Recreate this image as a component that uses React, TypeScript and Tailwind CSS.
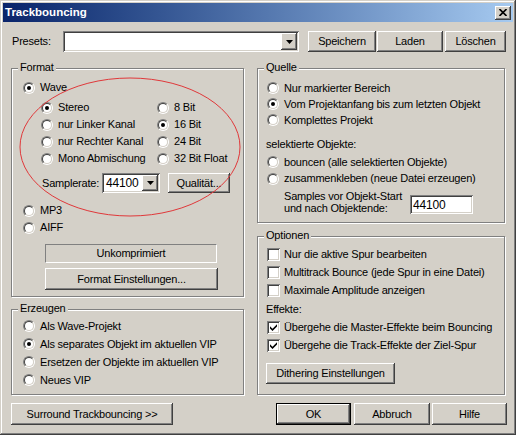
import React from 'react';

// Win2000-style bevels
const raised =
  'shadow-[inset_-1px_-1px_0_#404040,inset_1px_1px_0_#ffffff,inset_-2px_-2px_0_#808080,inset_2px_2px_0_#d4d0c8]';
const sunken =
  'shadow-[inset_1px_1px_0_#808080,inset_-1px_-1px_0_#ffffff,inset_2px_2px_0_#404040,inset_-2px_-2px_0_#d4d0c8]';

const Radio = ({ checked }: { checked?: boolean }) => (
  <span className="flex h-[12px] w-[12px] shrink-0 rounded-full border border-t-[#808080] border-l-[#808080] border-b-white border-r-white">
    <span className="flex h-full w-full items-center justify-center rounded-full border border-t-[#404040] border-l-[#404040] border-b-[#d4d0c8] border-r-[#d4d0c8] bg-white">
      {checked && <span className="h-[4px] w-[4px] rounded-full bg-black" />}
    </span>
  </span>
);

const Check = ({ checked }: { checked?: boolean }) => (
  <span className={`flex h-[13px] w-[13px] shrink-0 items-center justify-center bg-white ${sunken}`}>
    {checked && (
      <svg width="7" height="7" viewBox="0 0 7 7">
        <path d="M0 2.3 L2.5 4.8 L7 0.3 L7 2.5 L2.5 7 L0 4.5 Z" fill="#000" />
      </svg>
    )}
  </span>
);

const RadioRow = ({ label, checked, h = 'h-[17px]' }: { label: string; checked?: boolean; h?: string }) => (
  <div className={`flex items-center gap-[5px] ${h}`}>
    <Radio checked={checked} />
    <span className="whitespace-nowrap">{label}</span>
  </div>
);

const CheckRow = ({ label, checked }: { label: string; checked?: boolean }) => (
  <div className="flex h-[18px] items-center gap-[4px]">
    <Check checked={checked} />
    <span className="whitespace-nowrap">{label}</span>
  </div>
);

const Group = ({ title, className, children }: { title: string; className: string; children: React.ReactNode }) => (
  <div className={`relative flex flex-col border border-[#808080] shadow-[1px_1px_0_#ffffff,inset_1px_1px_0_#ffffff] ${className}`}>
    <span className="absolute -top-[8px] left-[6px] bg-[#d4d0c8] px-[2px] leading-[13px]">{title}</span>
    {children}
  </div>
);

const Btn = ({ children, className }: { children: React.ReactNode; className: string }) => (
  <button className={`flex shrink-0 items-center justify-center bg-[#d4d0c8] ${raised} ${className}`}>
    {children}
  </button>
);

const Arrow = () => (
  <svg width="7" height="4" viewBox="0 0 7 4">
    <path d="M0 0 H7 L3.5 4 Z" fill="#000" />
  </svg>
);

const Combo = ({ value, className }: { value?: string; className: string }) => (
  <div className={`flex shrink-0 bg-white p-[2px] ${sunken} ${className}`}>
    <span className="flex flex-1 items-center pl-[2px] text-[12px]">{value}</span>
    <span className={`flex w-[16px] items-center justify-center bg-[#d4d0c8] ${raised}`}>
      <Arrow />
    </span>
  </div>
);

export default function App() {
  return (
    <div
      className="relative flex h-[435px] w-[516px] flex-col overflow-hidden bg-[#d4d0c8] p-[3px] text-[11px] tracking-[-0.2px] text-black shadow-[inset_-1px_-1px_0_#404040,inset_1px_1px_0_#d4d0c8,inset_-2px_-2px_0_#808080,inset_2px_2px_0_#ffffff]"
      style={{ fontFamily: '"Liberation Sans", Arial, sans-serif' }}
    >
      {/* Title bar */}
      <div className="flex h-[19px] shrink-0 items-center bg-linear-to-r from-[#0a246a] to-[#a6caf0] pl-[2px] pr-[2px]">
        <span className="flex-1 text-[11.5px] font-bold tracking-normal text-white">Trackbouncing</span>
        <button className={`flex h-[14px] w-[16px] items-center justify-center bg-[#d4d0c8] ${raised}`}>
          <svg width="8" height="7" viewBox="0 0 8 7">
            <path d="M0.5 0 L7.5 7 M7.5 0 L0.5 7" stroke="#000" strokeWidth="1.6" />
          </svg>
        </button>
      </div>

      <div className="flex flex-col pl-[8px]">
        {/* Presets */}
        <div className="mt-[9px] flex h-[21px] items-center">
          <span className="w-[52px] pl-[1px]">Presets:</span>
          <Combo className="h-[21px] w-[236px]" />
          <Btn className="ml-[9px] h-[21px] w-[68px]">Speichern</Btn>
          <Btn className="ml-[1px] h-[21px] w-[66px]">Laden</Btn>
          <Btn className="ml-[2px] h-[21px] w-[61px]">Löschen</Btn>
        </div>

        <div className="mt-[16px] flex gap-[13px]">
          {/* Left column */}
          <div className="flex w-[233px] flex-col">
            <Group title="Format" className="h-[229px] pl-[11px] pt-[10px]">
              <RadioRow label="Wave" checked />
              <div className="ml-[18px] mt-[3px] grid grid-cols-[116px_1fr]">
                <RadioRow label="Stereo" checked />
                <RadioRow label="8 Bit" />
                <RadioRow label="nur Linker Kanal" />
                <RadioRow label="16 Bit" checked />
                <RadioRow label="nur Rechter Kanal" />
                <RadioRow label="24 Bit" />
                <RadioRow label="Mono Abmischung" />
                <RadioRow label="32 Bit Float" />
              </div>
              <div className="ml-[19px] mt-[6px] flex h-[20px] items-center">
                <span className="w-[60px]">Samplerate:</span>
                <Combo value="44100" className="h-[20px] w-[58px]" />
                <Btn className="ml-[8px] h-[20px] w-[62px]">Qualität...</Btn>
              </div>
              <div className="mt-[9px]">
                <RadioRow label="MP3" />
                <RadioRow label="AIFF" />
              </div>
              <div className="ml-[22px] mt-[8px] flex h-[19px] w-[172px] items-center justify-center border border-t-[#808080] border-l-[#808080] border-b-white border-r-white">
                Unkomprimiert
              </div>
              <Btn className="ml-[22px] mt-[5px] h-[22px] w-[173px]">Format Einstellungen...</Btn>
            </Group>

            <Group title="Erzeugen" className="mt-[12px] h-[86px] pl-[11px] pt-[7px]">
              <RadioRow h="h-[18px]" label="Als Wave-Projekt" />
              <RadioRow h="h-[18px]" label="Als separates Objekt im aktuellen VIP" checked />
              <RadioRow h="h-[18px]" label="Ersetzen der Objekte im aktuellen VIP" />
              <RadioRow h="h-[18px]" label="Neues VIP" />
            </Group>
          </div>

          {/* Right column */}
          <div className="flex w-[248px] flex-col">
            <Group title="Quelle" className="h-[155px] pl-[9px] pt-[11px]">
              <RadioRow h="h-[16px]" label="Nur markierter Bereich" />
              <RadioRow h="h-[16px]" label="Vom Projektanfang bis zum letzten Objekt" checked />
              <RadioRow h="h-[16px]" label="Komplettes Projekt" />
              <div className="-ml-[1px] mt-[8px] flex h-[16px] items-center">selektierte Objekte:</div>
              <div className="mt-[2px]">
                <RadioRow h="h-[16px]" label="bouncen (alle selektierten Objekte)" />
                <RadioRow label="zusammenkleben (neue Datei erzeugen)" />
              </div>
              <div className="mt-[3px] flex items-end">
                <span className="ml-[17px] w-[126px] leading-[12px]">
                  Samples vor Objekt-Start
                  <br />
                  und nach Objektende:
                </span>
                <span className={`flex h-[19px] w-[63px] items-center bg-white pl-[3px] text-[12px] ${sunken}`}>44100</span>
              </div>
            </Group>

            <Group title="Optionen" className="mt-[13px] h-[159px] pl-[9px] pt-[8px]">
              <CheckRow label="Nur die aktive Spur bearbeiten" />
              <CheckRow label="Multitrack Bounce (jede Spur in eine Datei)" />
              <CheckRow label="Maximale Amplitude anzeigen" />
              <div className="-ml-[1px] mt-[1px] flex h-[18px] items-center">Effekte:</div>
              <CheckRow label="Übergehe die Master-Effekte beim Bouncing" checked />
              <CheckRow label="Übergehe die Track-Effekte der Ziel-Spur" checked />
              <Btn className="-ml-[1px] mt-[9px] h-[21px] w-[129px]">Dithering Einstellungen</Btn>
            </Group>
          </div>
        </div>

        {/* Bottom buttons */}
        <div className="mt-[8px] flex h-[22px]">
          <Btn className="h-[22px] w-[162px]">Surround Trackbouncing &gt;&gt;</Btn>
          <Btn className="ml-[103px] h-[22px] w-[75px] border border-black">OK</Btn>
          <Btn className="ml-[3px] h-[22px] w-[76px]">Abbruch</Btn>
          <Btn className="ml-[2px] h-[22px] w-[75px]">Hilfe</Btn>
        </div>
      </div>

      {/* hand-drawn red ellipse annotation */}
      <svg className="pointer-events-none absolute left-0 top-0" width="516" height="435">
        <ellipse cx="130" cy="147" rx="110" ry="69" fill="none" stroke="#e0383a" strokeWidth="1" />
      </svg>
    </div>
  );
}
